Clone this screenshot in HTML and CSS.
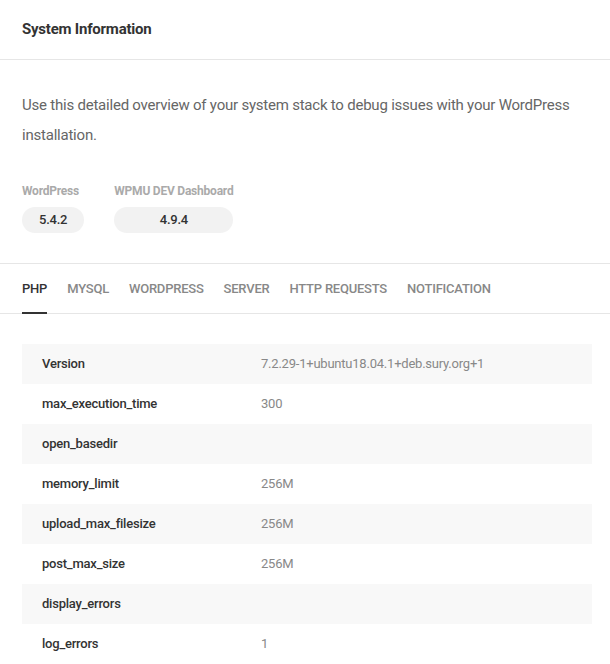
FILE: index.html
```html
<!DOCTYPE html>
<html lang="en">
<head>
<meta charset="utf-8">
<title>System Information</title>
<link rel="stylesheet" href="styles.css">
</head>
<body>
<div class="box">
  <div class="box-header">
    <h2 class="box-title">System Information</h2>
  </div>
  <div class="box-body">
    <p class="intro">Use this detailed overview of your system stack to debug issues with your WordPress installation.</p>
    <div class="versions">
      <div class="version">
        <span class="version-label">WordPress</span>
        <span class="pill">5.4.2</span>
      </div>
      <div class="version">
        <span class="version-label">WPMU DEV Dashboard</span>
        <span class="pill">4.9.4</span>
      </div>
    </div>
  </div>
  <div class="tabs">
    <span class="tab active">PHP</span>
    <span class="tab">MYSQL</span>
    <span class="tab">WORDPRESS</span>
    <span class="tab">SERVER</span>
    <span class="tab">HTTP REQUESTS</span>
    <span class="tab">NOTIFICATION</span>
  </div>
  <div class="tab-content">
    <table class="info-table">
      <tbody>
        <tr><td class="key">Version</td><td class="val">7.2.29-1+ubuntu18.04.1+deb.sury.org+1</td></tr>
        <tr><td class="key">max_execution_time</td><td class="val">300</td></tr>
        <tr><td class="key">open_basedir</td><td class="val"></td></tr>
        <tr><td class="key">memory_limit</td><td class="val">256M</td></tr>
        <tr><td class="key">upload_max_filesize</td><td class="val">256M</td></tr>
        <tr><td class="key">post_max_size</td><td class="val">256M</td></tr>
        <tr><td class="key">display_errors</td><td class="val"></td></tr>
        <tr><td class="key">log_errors</td><td class="val">1</td></tr>
      </tbody>
    </table>
  </div>
</div>
</body>
</html>
```
FILE: styles.css
```css
* { box-sizing: border-box; }
html, body { margin: 0; padding: 0; background: #fff; }
body {
  font-family: Roboto, "Liberation Sans", Arial, sans-serif;
  color: #333;
  letter-spacing: -0.22px;
  -webkit-font-smoothing: antialiased;
}
.box { width: 610px; background: #fff; }
.box-header {
  height: 60px;
  padding: 0 22px;
  display: flex;
  align-items: center;
  border-bottom: 1px solid #e6e6e6;
}
.box-title {
  margin: 0;
  font-size: 15px;
  font-weight: 700;
  line-height: 22px;
  color: #333;
  position: relative;
  top: -1px;
}
.box-body {
  padding: 30px 22px 30px 22px;
  border-bottom: 1px solid #e6e6e6;
}
.intro {
  margin: 0;
  font-size: 15px;
  line-height: 30px;
  color: #666;
  font-weight: 400;
}
.versions {
  display: flex;
  gap: 30px;
  margin-top: 32px;
}
.version {
  display: flex;
  flex-direction: column;
  align-items: stretch;
}
.version-label {
  font-size: 12px;
  line-height: 18px;
  font-weight: 700;
  color: #aaa;
  margin-bottom: 7px;
}
.pill {
  display: block;
  height: 26px;
  line-height: 26px;
  padding: 0 17px;
  border-radius: 13px;
  background: #f2f2f2;
  font-size: 13px;
  font-weight: 500;
  color: #333;
  text-align: center;
}
.tabs {
  display: flex;
  gap: 20px;
  padding: 0 22px;
  border-bottom: 1px solid #e6e6e6;
  height: 50px;
}
.tab {
  display: block;
  font-size: 13px;
  font-weight: 500;
  line-height: 22px;
  padding-top: 14px;
  color: #888;
  text-transform: uppercase;
  border-bottom: 2px solid transparent;
  margin-bottom: -1px;
}
.tab.active {
  color: #333;
  border-bottom-color: #333;
}
.tab-content {
  padding: 30px 18px 0 22px;
}
.info-table {
  width: 100%;
  border-collapse: collapse;
}
.info-table tr { height: 40px; }
.info-table tr:nth-child(odd) { background: #f8f8f8; }
.info-table td {
  padding: 0 20px;
  font-size: 13px;
  font-weight: 500;
  line-height: 22px;
  vertical-align: middle;
}
.info-table td.key { width: 239px; color: #333; }
.info-table td.val { color: #888; padding-left: 0; font-weight: 400; }
```
